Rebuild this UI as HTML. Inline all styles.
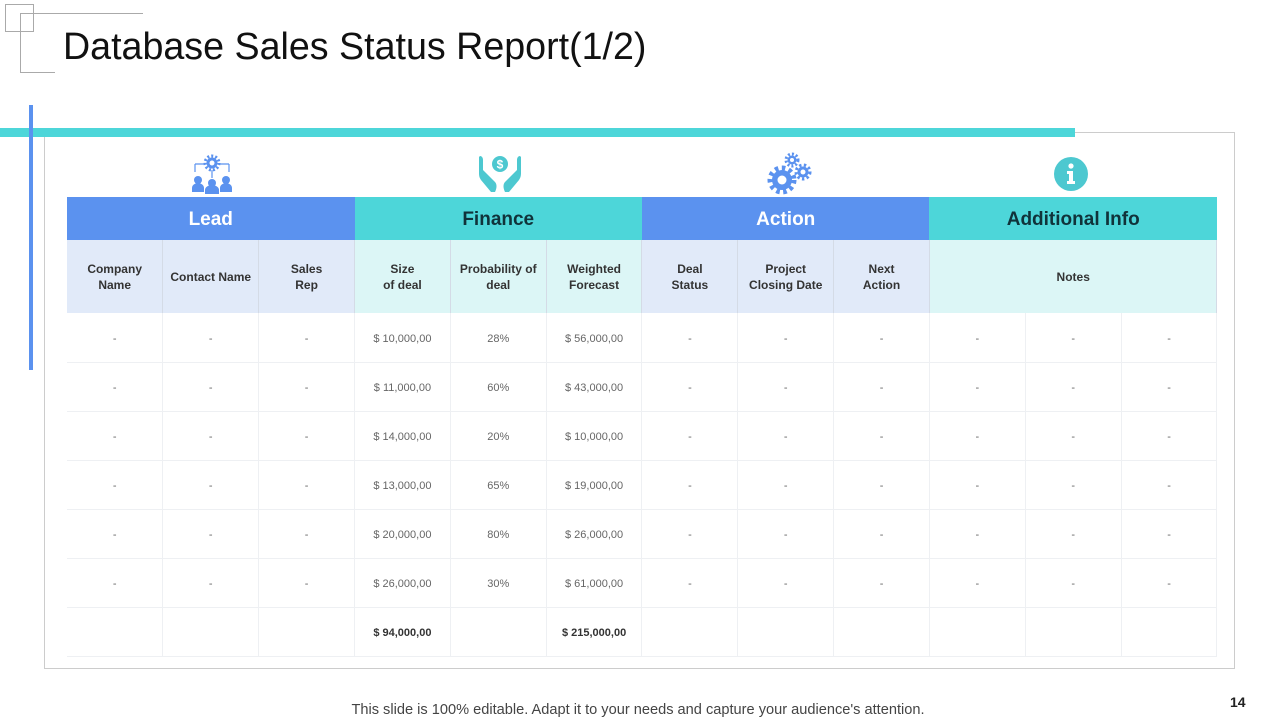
<!DOCTYPE html>
<html><head><meta charset="utf-8"><style>
*{margin:0;padding:0;box-sizing:border-box}
body{width:1280px;height:720px;background:#fff;position:relative;overflow:hidden;font-family:"Liberation Sans Narrow","Liberation Sans",sans-serif}
.a{position:absolute}
table{position:absolute;left:67px;top:197px;border-collapse:collapse;table-layout:fixed;width:1150px}
td{text-align:center;vertical-align:middle;font-size:11px;color:#666;border-right:1px solid #eef0f3;border-bottom:1px solid #eef0f3}
.h td{height:43px;font-size:19px;font-weight:bold;border:none;padding-top:3px}
.s td{height:73px;font-size:12px;font-weight:bold;color:#333;line-height:16px;border-right:1px solid #d4dbe6;border-bottom:none}
.r td{height:49px;padding-top:3px}
.b{background:#5b92ef;color:#fff}
.t{background:#4dd6d9;color:#10333a}
.lb{background:#e1eaf9}
.lt{background:#dcf6f6}
</style></head><body>
<div class="a" style="left:5px;top:4px;width:29px;height:28px;border:1px solid #aaa"></div>
<div class="a" style="left:20px;top:13px;width:123px;height:1px;background:#aaa"></div>
<div class="a" style="left:20px;top:13px;width:1px;height:59px;background:#aaa"></div>
<div class="a" style="left:20px;top:72px;width:35px;height:1px;background:#aaa"></div>
<div class="a" style="left:63px;top:24px;font-size:38px;color:#111;white-space:nowrap;line-height:46px;transform:scaleX(0.99);transform-origin:left">Database Sales Status Report(1/2)</div>
<div class="a" style="left:44px;top:132px;width:1191px;height:537px;border:1px solid #ccc"></div>
<div class="a" style="left:0;top:128px;width:1075px;height:9px;background:#4dd6d9"></div>
<div class="a" style="left:29px;top:105px;width:4px;height:265px;background:#5b92ef"></div>

<svg class="a" style="left:190px;top:152px" width="44" height="42" viewBox="0 0 44 42">
<g fill="#5b92ef"><circle cx="22" cy="11" r="5.5"/><g stroke="#5b92ef" stroke-width="3" stroke-dasharray="2 2"><circle cx="22" cy="11" r="7" fill="none"/></g><circle cx="22" cy="11" r="2.5" fill="#fff"/>
<path d="M5 12h10M5 12v8M39 12h-10M39 12v8M22 18v8" stroke="#5b92ef" stroke-width="1.2" fill="none"/>
<circle cx="8" cy="28" r="4"/><path d="M2 40v-4a6 5 0 0 1 12 0v4z"/>
<circle cx="36" cy="28" r="4"/><path d="M30 40v-4a6 5 0 0 1 12 0v4z"/>
<circle cx="22" cy="31" r="4"/><path d="M15 42v-4a7 5 0 0 1 14 0v4z"/></g></svg>
<svg class="a" style="left:477px;top:152px" width="46" height="42" viewBox="0 0 46 42">
<g fill="#4dc8d0"><circle cx="23" cy="12" r="8"/><text x="23" y="16.5" font-size="12" font-weight="bold" fill="#fff" text-anchor="middle" font-family="Liberation Sans">$</text>
<path d="M3 4c2 0 3 2 3 4v10l12 12c2 2 2 6 0 10H14L4 28c-2-3-2-5-2-8V5z"/>
<path d="M43 4c-2 0-3 2-3 4v10L28 30c-2 2-2 6 0 10h4l10-12c2-3 2-5 2-8V5z"/></g></svg>
<svg class="a" style="left:765px;top:152px" width="50" height="44" viewBox="0 0 50 44">
<g fill="#5b92ef"><circle cx="17" cy="28" r="10"/><g stroke="#5b92ef" stroke-width="5" stroke-dasharray="3.5 3.5" fill="none"><circle cx="17" cy="28" r="12"/></g><circle cx="17" cy="28" r="4.5" fill="#fff"/>
<circle cx="27" cy="8" r="4.5"/><g stroke="#5b92ef" stroke-width="3" stroke-dasharray="2 2" fill="none"><circle cx="27" cy="8" r="6"/></g><circle cx="27" cy="8" r="2" fill="#fff"/>
<circle cx="38" cy="20" r="5.5"/><g stroke="#5b92ef" stroke-width="3" stroke-dasharray="2.4 2.4" fill="none"><circle cx="38" cy="20" r="7"/></g><circle cx="38" cy="20" r="2.5" fill="#fff"/></g></svg>
<svg class="a" style="left:1054px;top:157px" width="34" height="34" viewBox="0 0 34 34">
<circle cx="17" cy="17" r="17" fill="#4dc8d0"/><circle cx="17" cy="9" r="2.6" fill="#fff"/><path d="M13 14h6v10h2v3h-8v-3h2v-7h-2z" fill="#fff"/></svg>

<table>
<colgroup><col span="12" style="width:95.83px"></colgroup>
<tr class="h"><td colspan="3" class="b">Lead</td><td colspan="3" class="t">Finance</td><td colspan="3" class="b">Action</td><td colspan="3" class="t">Additional Info</td></tr>
<tr class="s"><td class="lb">Company<br>Name</td><td class="lb">Contact Name</td><td class="lb">Sales<br>Rep</td><td class="lt">Size<br>of deal</td><td class="lt">Probability of<br>deal</td><td class="lt">Weighted<br>Forecast</td><td class="lb">Deal<br>Status</td><td class="lb">Project<br>Closing Date</td><td class="lb">Next<br>Action</td><td colspan="3" class="lt">Notes</td></tr>
<tr class="r"><td>-</td><td>-</td><td>-</td><td>$ 10,000,00</td><td>28%</td><td>$ 56,000,00</td><td>-</td><td>-</td><td>-</td><td>-</td><td>-</td><td>-</td></tr>
<tr class="r"><td>-</td><td>-</td><td>-</td><td>$ 11,000,00</td><td>60%</td><td>$ 43,000,00</td><td>-</td><td>-</td><td>-</td><td>-</td><td>-</td><td>-</td></tr>
<tr class="r"><td>-</td><td>-</td><td>-</td><td>$ 14,000,00</td><td>20%</td><td>$ 10,000,00</td><td>-</td><td>-</td><td>-</td><td>-</td><td>-</td><td>-</td></tr>
<tr class="r"><td>-</td><td>-</td><td>-</td><td>$ 13,000,00</td><td>65%</td><td>$ 19,000,00</td><td>-</td><td>-</td><td>-</td><td>-</td><td>-</td><td>-</td></tr>
<tr class="r"><td>-</td><td>-</td><td>-</td><td>$ 20,000,00</td><td>80%</td><td>$ 26,000,00</td><td>-</td><td>-</td><td>-</td><td>-</td><td>-</td><td>-</td></tr>
<tr class="r"><td>-</td><td>-</td><td>-</td><td>$ 26,000,00</td><td>30%</td><td>$ 61,000,00</td><td>-</td><td>-</td><td>-</td><td>-</td><td>-</td><td>-</td></tr>
<tr class="r"><td></td><td></td><td></td><td style="font-weight:bold;color:#333">$ 94,000,00</td><td></td><td style="font-weight:bold;color:#333">$ 215,000,00</td><td></td><td></td><td></td><td></td><td></td><td></td></tr>
</table>
<div class="a" style="left:0;width:1280px;top:702px;text-align:center;font-family:'Liberation Sans',sans-serif;font-size:14.6px;color:#444;transform:translateX(-2px)">This slide is 100% editable. Adapt it to your needs and capture your audience's attention.</div>
<div class="a" style="left:1230px;top:694px;font-family:'Liberation Sans',sans-serif;font-size:14px;font-weight:bold;color:#222">14</div>
</body></html>
